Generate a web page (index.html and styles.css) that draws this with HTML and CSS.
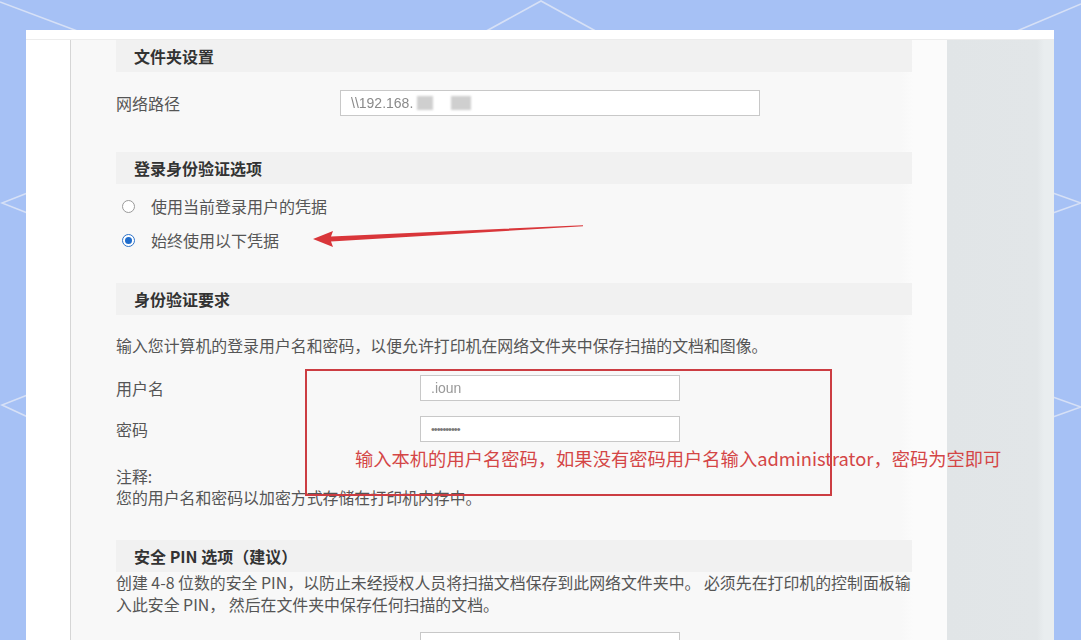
FILE: index.html
```html
<!DOCTYPE html>
<html lang="zh-CN">
<head>
<meta charset="utf-8">
<title>扫描到网络文件夹</title>
<link rel="stylesheet" href="styles.css">
</head>
<body>
<div class="page">
  <svg class="bg-lines" width="1081" height="640" viewBox="0 0 1081 640">
    <g fill="none" stroke="#d6e0f6" stroke-width="1.6">
      <polyline points="0,2 80,32"/>
      <polyline points="470,40 541,1 612,40"/>
      <polyline points="1010,34 1081,4"/>
      <polyline points="30,192 2,203 30,214"/>
      <polyline points="30,394 2,405 30,418"/>
      <polyline points="1050,192 1081,203 1050,214"/>
      <polyline points="1050,396 1081,407 1050,418"/>
    </g>
  </svg>

  <div class="panel">
    <div class="panel-top"></div>
    <div class="panel-body">
      <div class="gutter"></div>
      <main class="content">
        <div class="section-head">文件夹设置</div>
        <div class="row row-path">
          <span class="label label-wide">网络路径</span>
          <div class="input input-path"><span class="blur">\\192.168.</span><span class="smudge s1"></span><span class="smudge s2"></span></div>
        </div>

        <div class="section-head head-2">登录身份验证选项</div>
        <div class="radio-row radio-first">
          <span class="radio"></span><span class="radio-text">使用当前登录用户的凭据</span>
        </div>
        <div class="radio-row">
          <span class="radio radio-on"><span class="dot"></span></span><span class="radio-text">始终使用以下凭据</span>
        </div>

        <div class="section-head head-3">身份验证要求</div>
        <p class="para para-auth">输入您计算机的登录用户名和密码，以便允许打印机在网络文件夹中保存扫描的文档和图像。</p>
        <div class="row row-user">
          <span class="label label-user">用户名</span>
          <div class="input input-short"><span class="blur user-val">.ioun</span></div>
        </div>
        <div class="row row-pass">
          <span class="label label-user">密码</span>
          <div class="input input-short"><span class="dots">••••••••••</span></div>
        </div>
        <div class="note">
          <div>注释:</div>
          <div>您的用户名和密码以加密方式存储在打印机内存中。</div>
        </div>

        <div class="section-head head-4">安全 PIN 选项（建议）</div>
        <p class="para para-pin"><span class="line">创建 4-8 位数的安全 PIN，以防止未经授权人员将扫描文档保存到此网络文件夹中。 必须先在打印机的控制面板输</span><span class="line">入此安全 PIN， 然后在文件夹中保存任何扫描的文档。</span></p>
        <div class="row row-pin">
          <span class="label label-user label-pin">安全 PIN</span>
          <div class="input input-short"></div>
        </div>
      </main>
      <aside class="sidebar"></aside>
    </div>
  </div>

  <svg class="anno-arrow" width="290" height="30" viewBox="0 0 290 30">
    <path d="M2,18 L22,10 L20,15.5 L272,4.2 L272,5.2 L20,20.5 L22,26 Z" fill="#d9363a"/>
  </svg>
  <div class="anno-box"></div>
  <div class="anno-text">输入本机的用户名密码，如果没有密码用户名输入administrator，密码为空即可</div>
</div>
</body>
</html>
```

FILE: styles.css
```css
html, body {
  margin: 0;
  padding: 0;
  width: 1081px;
  height: 640px;
  overflow: hidden;
  background: #a6c1f5;
}

.page {
  position: relative;
  width: 1081px;
  height: 640px;
  padding: 30px 27px 0 26px;
  box-sizing: border-box;
  font-family: "Noto Sans CJK SC", "Noto Sans", sans-serif;
}

.bg-lines {
  position: absolute;
  left: 0;
  top: 0;
}

.panel {
  position: relative;
  height: 610px;
  background: #ffffff;
  display: flex;
  flex-direction: column;
  overflow: hidden;
}

.panel-top {
  height: 9px;
  background: #ffffff;
  border-bottom: 1px solid #ececec;
  flex: none;
}

.panel-body {
  flex: 1;
  display: flex;
}

.gutter {
  width: 44px;
  flex: none;
  background: #ffffff;
  border-right: 1px solid #d6d6d6;
}

.content {
  width: 876px;
  flex: none;
  box-sizing: border-box;
  padding: 0 35px 0 45px;
  background: linear-gradient(to right, #f8f8f8 0, #f8f8f8 830px, #fbfbfb 842px, #fbfbfb 100%);
  color: #555555;
}

.sidebar {
  flex: 1;
  background: linear-gradient(to right, #e1e5e7 0, #e2e6e8 90px, #e9edef 97px, #e9edef 100%);
}

.section-head {
  height: 32px;
  line-height: 32px;
  padding-left: 18px;
  background: #f1f1f1;
  font-size: 16px;
  font-weight: 700;
  color: #333333;
}

.head-2 { margin-top: 36px; }
.head-3 { margin-top: 26px; }
.head-4 { margin-top: 32px; }

.row {
  display: flex;
  align-items: center;
  height: 26px;
}

.row-path { margin-top: 18px; }
.row-user { margin-top: 18px; }
.row-pass { margin-top: 15px; }
.row-pin { margin-top: 16px; }

.label {
  font-size: 16px;
  color: #555555;
  flex: none;
}

.label-wide { width: 224px; }
.label-user { width: 304px; }
.label-pin { align-self: flex-start; line-height: 20px; padding-top: 7px; }

.input {
  height: 26px;
  box-sizing: border-box;
  border: 1px solid #c8c8c8;
  background: #ffffff;
  display: flex;
  align-items: center;
  padding-left: 10px;
  font-size: 14px;
  color: #8a8a8a;
  font-family: "Liberation Sans", sans-serif;
}

.input-path { width: 420px; }
.input-short { width: 260px; }

.blur {
  filter: blur(0.7px);
}

.user-val { color: #999999; }

.smudge {
  display: inline-block;
  height: 14px;
  background: #cfcfcf;
  filter: blur(1px);
}

.s1 { width: 16px; margin-left: 4px; }
.s2 { width: 20px; margin-left: 18px; }

.dots {
  letter-spacing: -1px;
  font-size: 11px;
  color: #7a7a7a;
}

.radio-first { margin-top: 5px; }

.radio-row {
  display: flex;
  align-items: center;
  height: 34px;
}

.radio {
  width: 13px;
  height: 13px;
  box-sizing: border-box;
  margin-left: 6px;
  border: 1px solid #9a9a9a;
  border-radius: 50%;
  background: #ffffff;
  display: flex;
  align-items: center;
  justify-content: center;
  flex: none;
}

.radio-on {
  border-color: #2d73c9;
}

.dot {
  width: 7px;
  height: 7px;
  border-radius: 50%;
  background: #1f6ccc;
}

.radio-text {
  margin-left: 16px;
  font-size: 16px;
  color: #555555;
}

.para {
  margin: 0;
  font-size: 15.9px;
  line-height: 22px;
  color: #555555;
}

.para-auth { margin-top: 20px; }

.line {
  display: block;
  white-space: nowrap;
}

.note {
  margin-top: 24px;
  font-size: 15.9px;
  line-height: 21px;
  color: #555555;
}

.anno-arrow {
  position: absolute;
  left: 311px;
  top: 221px;
}

.anno-box {
  position: absolute;
  left: 305px;
  top: 369px;
  width: 527px;
  height: 127px;
  box-sizing: border-box;
  border: 2px solid #cc3d42;
}

.anno-text {
  position: absolute;
  left: 355px;
  top: 446px;
  font-size: 18.3px;
  line-height: 24px;
  white-space: nowrap;
  color: #d44646;
  font-family: "Noto Sans CJK SC", "Noto Sans", sans-serif;
}
```
